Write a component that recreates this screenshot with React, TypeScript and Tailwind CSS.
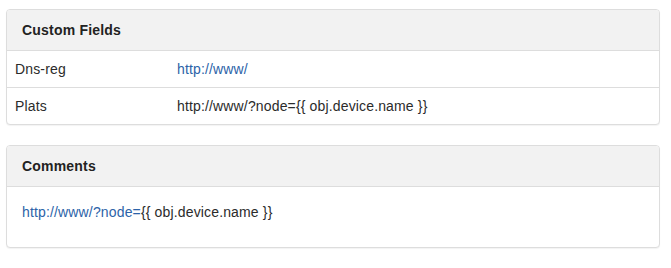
import React from "react";

const rows = [
  { label: "Dns-reg", value: "http://www/", link: true },
  { label: "Plats", value: "http://www/?node={{ obj.device.name }}", link: false },
];

function Panel({ title, children }: { title: string; children: React.ReactNode }) {
  return (
    <div className="mb-5 overflow-hidden rounded-[4px] border border-[#dddddd] bg-white shadow-[0_1px_1px_rgba(0,0,0,0.05)]">
      <div className="border-b border-[#dddddd] bg-[#f2f2f2] px-[15px] py-[10px]">
        <h3 className="text-[14px] font-bold leading-5 tracking-[0.2px] text-[#222222]">{title}</h3>
      </div>
      {children}
    </div>
  );
}

export default function App() {
  return (
    <div className="w-[660px] pl-[6px] pt-[9px] font-['Liberation_Sans',Arial,sans-serif] text-[14px] leading-5 tracking-[0.15px] text-[#2b2b2b]">
      <Panel title="Custom Fields">
        <table className="w-full border-collapse">
          <tbody>
            {rows.map((row, i) => (
              <tr key={row.label} className={i > 0 ? "border-t border-[#dddddd]" : ""}>
                <td className="w-[162px] p-2">{row.label}</td>
                <td className="p-2">
                  {row.link ? <a className="text-[#2c63a8]">{row.value}</a> : row.value}
                </td>
              </tr>
            ))}
          </tbody>
        </table>
      </Panel>
      <Panel title="Comments">
        <div className="p-[15px]">
          <p className="mb-[10px]">
            <a className="text-[#2c63a8]">http://www/?node=</a>
            {"{{ obj.device.name }}"}
          </p>
        </div>
      </Panel>
    </div>
  );
}
